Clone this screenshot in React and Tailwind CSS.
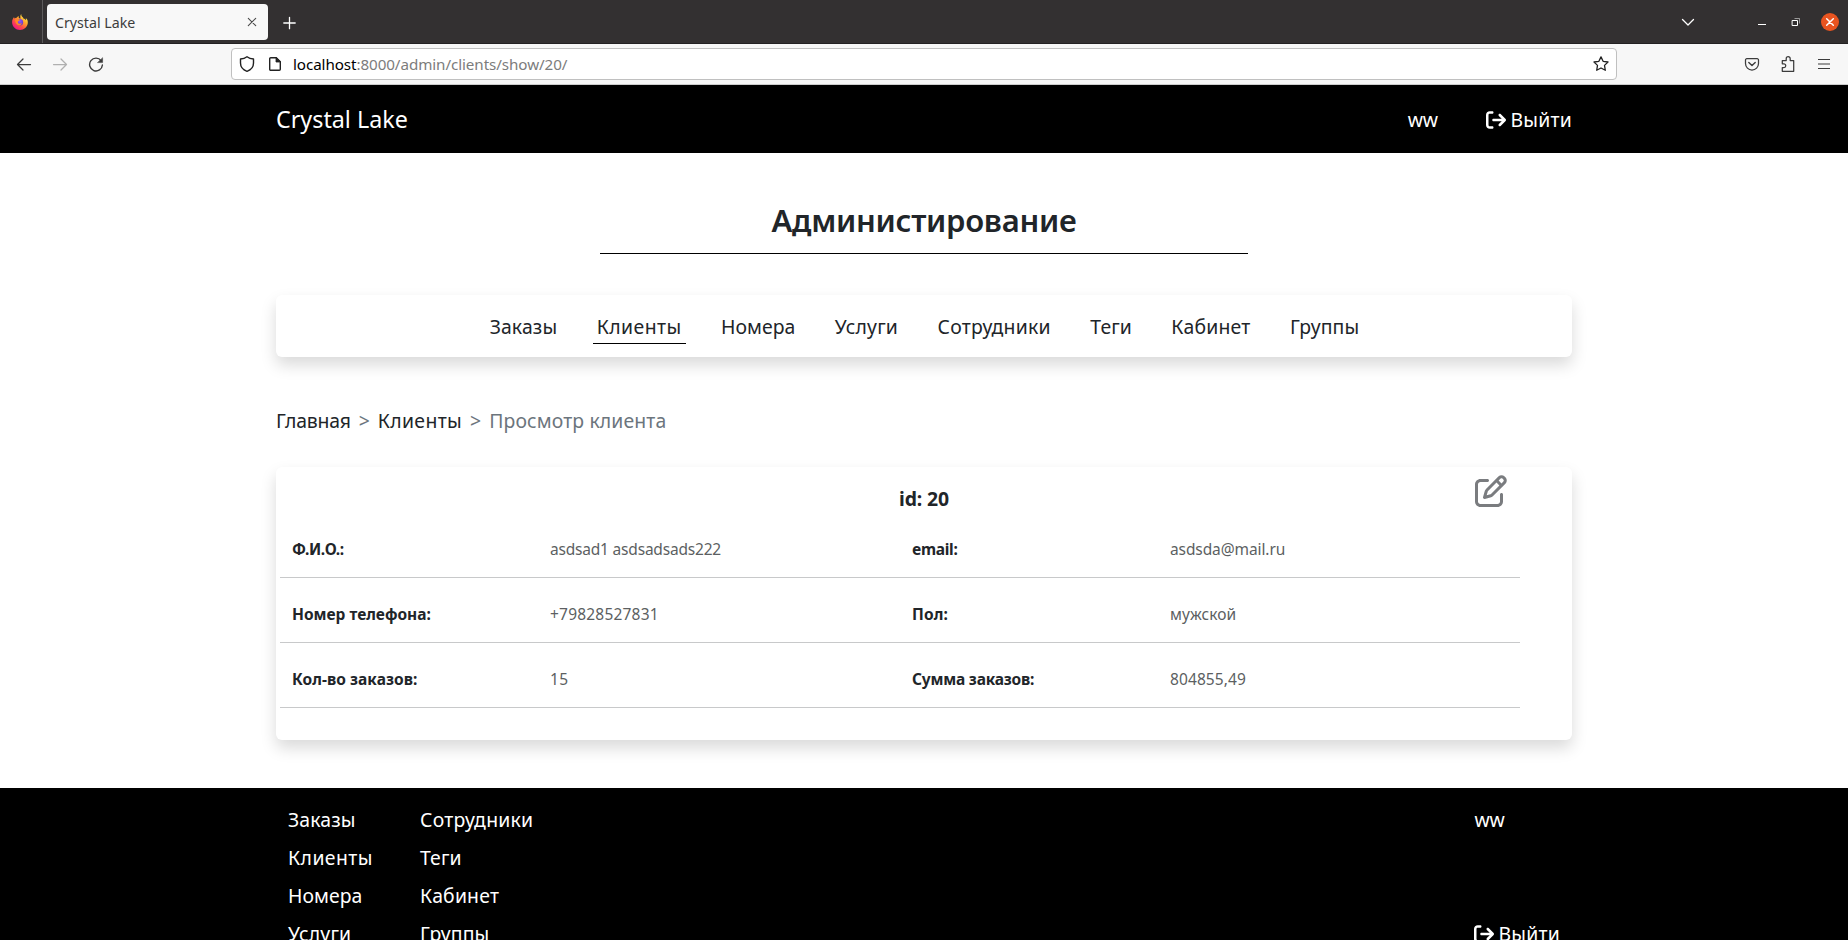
import React from "react";
import { FaArrowRightFromBracket, FaRegPenToSquare } from "react-icons/fa6";

const navItems = [
  { label: "Заказы", track: "tracking-[0.14px]" },
  { label: "Клиенты", track: "tracking-[0.44px]", active: true },
  { label: "Номера", track: "tracking-[0.04px]" },
  { label: "Услуги", track: "tracking-[0.2px]" },
  { label: "Сотрудники", track: "tracking-[0.25px]" },
  { label: "Теги", track: "tracking-[0.11px]" },
  { label: "Кабинет", track: "tracking-[0.2px]" },
  { label: "Группы", track: "tracking-[0.15px]" },
];

const rows = [
  [
    { label: "Ф.И.О.:", lt: "tracking-[-0.4px]", value: "asdsad1 asdsadsads222", vt: "tracking-[-0.2px]" },
    { label: "email:", lt: "tracking-[-0.3px]", value: "asdsda@mail.ru", vt: "tracking-[-0.1px]" },
  ],
  [
    { label: "Номер телефона:", lt: "tracking-normal", value: "+79828527831", vt: "tracking-[0.2px]" },
    { label: "Пол:", lt: "tracking-[0.14px]", value: "мужской", vt: "tracking-[0.08px]" },
  ],
  [
    { label: "Кол-во заказов:", lt: "tracking-[0.06px]", value: "15", vt: "tracking-[0.3px]" },
    { label: "Сумма заказов:", lt: "tracking-[-0.2px]", value: "804855,49", vt: "tracking-[0.1px]" },
  ],
];

function Icon({ children, size = 16, className = "" }) {
  return (
    <svg
      width={size}
      height={size}
      viewBox={`0 0 ${size} ${size}`}
      fill="none"
      stroke="currentColor"
      strokeWidth="1.25"
      strokeLinecap="round"
      strokeLinejoin="round"
      className={`shrink-0 ${className}`}
    >
      {children}
    </svg>
  );
}

function FirefoxLogo() {
  return (
    <svg width="16" height="16" viewBox="0 0 16 16">
      <defs>
        <linearGradient id="flame" x1="0.85" y1="0.1" x2="0.2" y2="0.95">
          <stop offset="0" stopColor="#fff44f" />
          <stop offset="0.35" stopColor="#ffa42a" />
          <stop offset="0.65" stopColor="#ff4f45" />
          <stop offset="1" stopColor="#f0108c" />
        </linearGradient>
        <radialGradient id="globe" cx="0.5" cy="0.35" r="0.7">
          <stop offset="0" stopColor="#9059ff" />
          <stop offset="1" stopColor="#5b2fc0" />
        </radialGradient>
      </defs>
      <path
        fill="url(#flame)"
        d="M9.3 0c-.3 1.3.5 2.300 1.200 3 .6.500.9 1 .9 1.400 1.300.2 2.200 1 2.600 1.900.1-.8 0-1.600-.3-2.300C15.300 5 16 6.900 15.800 9c-.4 4-3.700 7-7.800 7-4.300 0-7.700-3.200-7.900-7.500C0 6.300.8 4.500 2.100 3.100c0 .6.100 1 .4 1.400.6-.5 1.300-.7 2.100-.7.500-.9 1.300-1.600 2.200-1.900C6.500 2.700 6.600 3.400 7 4c.5.500 1.100.6 1.600.6C8.200 3 8 1.200 9.300 0z"
      />
      <circle cx="7.800" cy="8.300" r="3.300" fill="url(#globe)" />
      <path
        fill="#ff8a26"
        d="M3 5.500C4.600 4.600 6.600 4.700 8 5.900 7.300 7 6.200 6.700 5.900 7.700c-.3 1.200.7 2.100 1.900 2.100.9 0 1.500-.4 2.100-.7-.4 1.600-1.700 2.500-3.200 2.300C4.500 11 3 8.500 3 5.500z"
      />
    </svg>
  );
}

function TabBar() {
  return (
    <div className="flex h-11 shrink-0 items-start border-b border-[#232122] bg-[#333031] text-white">
      <div className="flex h-[43px] w-[43px] items-center border-r border-[#5c5a5b] pl-3">
        <FirefoxLogo />
      </div>
      <div className="mt-1 ml-1 flex h-9 w-[221px] items-center justify-between rounded-[4px] bg-[#f8f8f8] pr-2 pl-2 text-[#3d3d3d]">
        <span className="pt-px text-[14.2px] leading-9">Crystal Lake</span>
        <Icon className="text-[#4a4a4a]">
          <path d="M4.300 4.300l7.400 7.400M11.700 4.300l-7.400 7.400" strokeWidth="1.100" />
        </Icon>
      </div>
      <div className="flex h-[45px] w-[43px] items-center justify-center">
        <Icon>
          <path d="M7.500 2.300v11.400M1.800 8h11.400" strokeWidth="1.300" />
        </Icon>
      </div>
      <div className="ml-auto flex h-11 items-center pr-[9px]">
        <Icon className="mr-[58px]">
          <path d="M2.500 5.500L8 11l5.500-5.500" strokeWidth="1.300" />
        </Icon>
        <Icon className="mr-[18px]">
          <path d="M4 10.500h8" strokeWidth="1" strokeLinecap="butt" />
        </Icon>
        <Icon className="mr-[17px]">
          <path d="M4.500 6.500h5v5h-5z" strokeWidth="1" strokeLinejoin="miter" />
          <path d="M6.500 4.500h5v5" strokeWidth="1" strokeLinecap="butt" strokeLinejoin="miter" opacity="0.5" />
        </Icon>
        <div className="flex size-[18px] items-center justify-center rounded-full bg-[#e95420]">
          <Icon>
            <path d="M4.700 4.700l6.600 6.600M11.300 4.700l-6.600 6.600" strokeWidth="1.500" />
          </Icon>
        </div>
      </div>
    </div>
  );
}

function Toolbar() {
  return (
    <div className="flex h-[41px] shrink-0 items-center border-b border-[#cccccc] bg-[#f7f7f7] px-1.5 text-[#3c3c3c]">
      <div className="flex w-9 justify-center">
        <Icon>
          <path d="M14.500 8.500h-13M7 3L1.500 8.500 7 14" />
        </Icon>
      </div>
      <div className="flex w-9 justify-center text-[#b0b0b0]">
        <Icon>
          <path d="M1.500 8.500h13M9 3l5.500 5.500L9 14" />
        </Icon>
      </div>
      <div className="flex w-9 justify-center">
        <Icon>
          <path d="M13.200 4.800A6.400 6.400 0 1 0 14.400 9" strokeWidth="1.400" />
          <path d="M14.600 2v4.600h-4.800z" fill="currentColor" strokeWidth="0.500" />
        </Icon>
      </div>
      <div className="ml-[117px] flex h-8 w-[1386px] items-center rounded-[4px] border border-[#c0c0c0] bg-white px-[7px] text-[#222222]">
        <Icon>
          <path d="M8 .8C6.200 2.200 3.900 2.900 1.500 3v4c0 3.800 2.300 6.800 6.500 8.300 4.200-1.500 6.500-4.500 6.500-8.300V3C12.100 2.900 9.800 2.200 8 .8z" strokeWidth="1.400" />
        </Icon>
        <Icon className="ml-3">
          <path d="M3.700 1.700h5.600l4 4v7.600a1 1 0 0 1-1 1H3.700a1 1 0 0 1-1-1V2.700a1 1 0 0 1 1-1z" strokeWidth="1.400" />
          <path d="M9 1.700v4.300h4.300z" fill="currentColor" strokeWidth="0.800" />
        </Icon>
        <span className="ml-2.5 text-[15.2px] leading-[30px] tracking-[-0.08px] text-[#7c7c7c]">
          <span className="text-black">localhost</span>:8000/admin/clients/show/20/
        </span>
        <Icon className="ml-auto">
          <path d="M8 .9l2.100 4.400 4.900.7-3.500 3.400.8 4.900L8 12l-4.300 2.300.8-4.900L1 6l4.900-.7z" strokeWidth="1.300" />
        </Icon>
      </div>
      <div className="ml-auto flex w-9 justify-center">
        <Icon>
          <path d="M2.800 2.700h10.400a1.300 1.300 0 0 1 1.300 1.300v3.500a6.500 6.500 0 0 1-13 0V4a1.300 1.300 0 0 1 1.300-1.300z" />
          <path d="M4.800 6.500L8 9.600l3.200-3.100" strokeWidth="1.400" />
        </Icon>
      </div>
      <div className="flex w-9 justify-center">
        <Icon>
          <path d="M2.300 15.300h11.400V4.500h-3.500V2.700a2 2 0 0 0-4 0v1.800H2.300V7.800h1.600a1.850 1.850 0 0 1 0 3.700H2.300z" />
        </Icon>
      </div>
      <div className="flex w-9 justify-center">
        <Icon>
          <path d="M2 3.500h12M2 8h12M2 12.500h12" strokeLinecap="butt" strokeWidth="1.200" />
        </Icon>
      </div>
    </div>
  );
}

function Logout() {
  return (
    <span className="flex items-center gap-1 text-[19.4px] leading-[30px] tracking-[0.23px]">
      <FaArrowRightFromBracket className="size-5" />
      Выйти
    </span>
  );
}

function FooterColumn({ items }) {
  return (
    <ul className="flex flex-col gap-2">
      {items.map((item) => (
        <li key={item.label} className={item.track}>
          {item.label}
        </li>
      ))}
    </ul>
  );
}

export default function App() {
  return (
    <div className="flex h-[940px] w-[1848px] flex-col overflow-hidden bg-white font-['Noto_Sans',sans-serif] text-[19.4px] leading-[30px] text-[#212529]">
      <TabBar />
      <Toolbar />
      <header className="h-[68px] shrink-0 bg-black text-white">
        <div className="mx-auto flex h-full w-[1296px] items-center justify-between">
          <span className="text-[23.3px]">Crystal Lake</span>
          <div className="flex items-center gap-[48.5px] pt-px">
            <span className="tracking-[-0.1px]">ww</span>
            <Logout />
          </div>
        </div>
      </header>

      <main className="mx-auto flex w-[1296px] shrink-0 flex-col">
        <h1 className="mx-auto mt-12 h-[53px] w-[648px] border-b border-black text-center text-[31px] leading-[38px] font-semibold tracking-[-0.28px]">
          Администирование
        </h1>
        <nav className="mt-[41px] flex h-[62px] items-center justify-center gap-[31.4px] rounded-[6px] bg-white pl-px shadow-[0_8px_16px_rgba(0,0,0,0.15)]">
          {navItems.map((item) => (
            <a
              key={item.label}
              className={`h-9 border-b px-1 leading-[38px] ${item.track} ${item.active ? "border-black" : "border-transparent"}`}
            >
              {item.label}
            </a>
          ))}
        </nav>

        <div className="mt-[49px] flex text-[#6c757d]">
          <span className="tracking-[-0.23px] text-[#212529]">Главная</span>
          <span className="mx-2">&gt;</span>
          <span className="tracking-[0.35px] text-[#212529]">Клиенты</span>
          <span className="mx-2">&gt;</span>
          <span className="tracking-[0.12px]">Просмотр клиента</span>
        </div>

        <section className="relative mt-[31px] h-[273px] rounded-[6px] bg-white pt-[17px] pl-1 shadow-[0_8px_16px_rgba(0,0,0,0.15)]">
          <h2 className="pr-1 text-center font-bold tracking-[-0.13px]">id: 20</h2>
          <FaRegPenToSquare className="absolute top-2 left-[1199px] size-8 text-[#7a7c7f]" />
          <div className="-mt-px w-[1240px] text-[15.5px] leading-6">
            {rows.map((row) => (
              <div key={row[0].label} className="grid h-[65px] grid-cols-2 border-b border-[#c8c9ca] pt-6">
                {row.map((cell) => (
                  <div key={cell.label} className="grid grid-cols-[258px_1fr] pl-3">
                    <span className={`font-bold ${cell.lt}`}>{cell.label}</span>
                    <span className={`text-[#5c5f62] ${cell.vt}`}>{cell.value}</span>
                  </div>
                ))}
              </div>
            ))}
          </div>
        </section>
      </main>

      <footer className="mt-12 h-[200px] shrink-0 bg-black text-white">
        <div className="mx-auto flex w-[1296px] px-3 pt-[17px]">
          <div className="w-[132px]">
            <FooterColumn items={navItems.slice(0, 4)} />
          </div>
          <FooterColumn items={navItems.slice(4)} />
          <div className="ml-auto flex flex-col justify-between">
            <span className="tracking-[-0.1px]">ww</span>
            <Logout />
          </div>
        </div>
      </footer>
    </div>
  );
}
